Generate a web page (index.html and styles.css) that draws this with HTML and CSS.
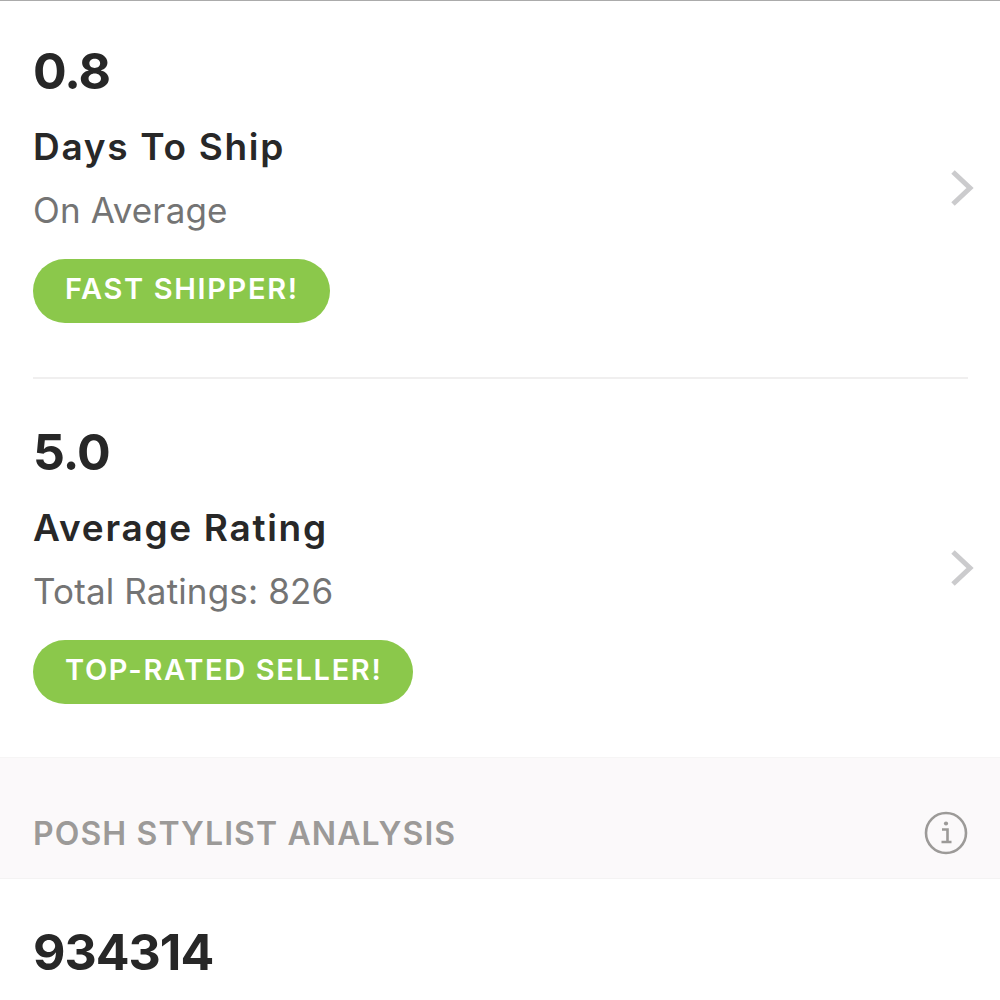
FILE: index.html
```html
<!DOCTYPE html>
<html lang="en">
<head>
<meta charset="utf-8">
<title>Seller Stats</title>
<link rel="stylesheet" href="styles.css">
</head>
<body>
<main class="page">
  <section class="stat">
    <div class="stat-body">
      <div class="value">0.8</div>
      <div class="title">Days To Ship</div>
      <div class="sub">On Average</div>
      <div class="badge">FAST SHIPPER!</div>
    </div>
    <svg class="chev" viewBox="0 0 26 38" width="26" height="38" aria-hidden="true"><path d="M4 3 L21 19 L4 35" fill="none" stroke="#cbcbcd" stroke-width="5"/></svg>
  </section>
  <section class="stat stat-second">
    <div class="stat-body">
      <div class="value">5.0</div>
      <div class="title">Average Rating</div>
      <div class="sub">Total Ratings: 826</div>
      <div class="badge">TOP-RATED SELLER!</div>
    </div>
    <svg class="chev" viewBox="0 0 26 38" width="26" height="38" aria-hidden="true"><path d="M4 3 L21 19 L4 35" fill="none" stroke="#cbcbcd" stroke-width="5"/></svg>
  </section>
  <header class="band">
    <span class="band-title">POSH STYLIST ANALYSIS</span>
    <svg class="info" viewBox="0 0 44 44" width="44" height="44" aria-hidden="true">
      <circle cx="22" cy="22" r="20" fill="none" stroke="#9c9a98" stroke-width="2.6"/>
      <circle cx="22" cy="12.5" r="2.1" fill="#9c9a98"/>
      <path d="M18 18.5 H23.5 V30 M17.5 31 H27.5" fill="none" stroke="#9c9a98" stroke-width="2.6"/>
    </svg>
  </header>
  <section class="stat-last">
    <div class="value">934314</div>
  </section>
</main>
</body>
</html>
```
FILE: styles.css
```css
html, body { margin: 0; padding: 0; background: #fff; }
body { font-family: "Inter", "Liberation Sans", sans-serif; overflow: hidden; height: 1000px; }
.page { border-top: 1px solid #ababab; display: flex; flex-direction: column; }
.stat { display: flex; align-items: center; justify-content: space-between; margin: 0 32px 0 33px; height: 376px; border-bottom: 2px solid #f0efef; }
.stat-second { height: 375px; padding-top: 3px; border-bottom: 0; }
.stat-body { display: flex; flex-direction: column; align-items: flex-start; }
.value { font-size: 50px; line-height: 60px; font-weight: 700; color: #272727; margin-top: 40px; letter-spacing: -1px; }
.title { font-size: 37px; line-height: 48px; font-weight: 600; color: #282828; margin-top: 22px; letter-spacing: 1.7px; }
.sub { font-size: 35px; line-height: 44px; font-weight: 400; color: #747474; margin-top: 17px; letter-spacing: .15px; }
.badge { height: 64px; line-height: 60px; border-radius: 32px; background: #8bc84b; color: #fff; font-size: 29px; font-weight: 600; letter-spacing: 1.65px; padding: 0 31px 0 32px; margin-top: 27px; margin-bottom: 54px; }
.chev { margin-right: -7px; margin-top: -3px; }
.band { display: flex; align-items: center; justify-content: space-between; height: 90px; padding: 30px 32px 0 33px; background: #fbf9fa; border-top: 1px solid #f6f5f5; border-bottom: 1px solid #f4f3f3; }
.band-title { font-size: 32px; font-weight: 600; color: #9c9a98; letter-spacing: 1.1px; }
.stat-last { padding: 0 33px; }
.stat-last .value { margin-top: 43px; }
```
